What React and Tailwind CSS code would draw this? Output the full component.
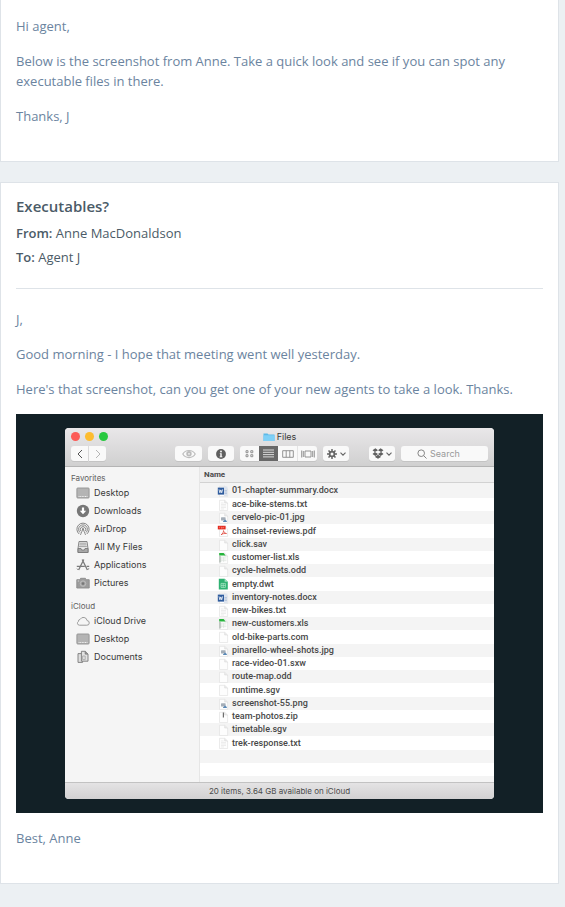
import React from "react";

const files = [
  ["01-chapter-summary.docx", "doc"],
  ["ace-bike-stems.txt", "text"],
  ["cervelo-pic-01.jpg", "image"],
  ["chainset-reviews.pdf", "pdf"],
  ["click.sav", "blank"],
  ["customer-list.xls", "sheet"],
  ["cycle-helmets.odd", "blank"],
  ["empty.dwt", "template"],
  ["inventory-notes.docx", "doc"],
  ["new-bikes.txt", "text"],
  ["new-customers.xls", "sheet"],
  ["old-bike-parts.com", "blank"],
  ["pinarello-wheel-shots.jpg", "image"],
  ["race-video-01.sxw", "blank"],
  ["route-map.odd", "blank"],
  ["runtime.sgv", "blank"],
  ["screenshot-55.png", "image"],
  ["team-photos.zip", "zip"],
  ["timetable.sgv", "blank"],
  ["trek-response.txt", "text"],
];

const favorites = [
  ["Desktop", "desktop"],
  ["Downloads", "downloads"],
  ["AirDrop", "airdrop"],
  ["All My Files", "allfiles"],
  ["Applications", "applications"],
  ["Pictures", "pictures"],
];

const icloud = [
  ["iCloud Drive", "cloud"],
  ["Desktop", "desktop"],
  ["Documents", "documents"],
];

function FileIcon({ kind }) {
  return (
    <svg viewBox="0 0 12 12" className="h-3 w-3 shrink-0" aria-hidden="true">
      {kind !== "template" && (
        <path d="M2.5 1.3h5.2L10.6 4v7.5H2.5z" fill="#fdfdfd" stroke="#dedede" strokeWidth=".6" />
      )}
      {kind !== "template" && kind !== "pdf" && (
        <path d="M7.7 1.3V4h2.9" fill="#ececec" stroke="#d4d4d4" strokeWidth=".5" />
      )}
      {kind === "doc" && (
        <>
          <path d="M7 1.600h3.400v9.500H7z" fill="#dde4ee" />
          <path d="M7.500 5.5h2.400M7.500 7h2.400M7.500 8.5h2.400" stroke="#a9bbd6" strokeWidth=".7" />
          <rect x=".8" y="2.600" width="6.200" height="7" fill="#2f5c9e" />
          <path d="M2 4.4l.9 3.4.9-2.9.9 2.9.9-3.4" fill="none" stroke="#fff" strokeWidth=".8" />
        </>
      )}
      {kind === "text" && (
        <path d="M4 4h2.6M4 5.5h5M4 7h5M4 8.5h5M4 10h3" stroke="#e2e2e2" strokeWidth=".6" />
      )}
      {kind === "image" && (
        <>
          <rect x="4" y="5.2" width="4.600" height="3.4" rx=".6" fill="#a5aeb8" />
          <path d="M6 9.400l2-2 1.800 1.600v.900H6z" fill="#5b89b6" />
        </>
      )}
      {kind === "pdf" && (
        <>
          <rect x=".8" y=".8" width="7.8" height="3.6" fill="#e5281c" />
          <path d="M2.4 3.3V2h1M4.4 3.3V2h.8v1.3zM6.5 3.3V2h.9" stroke="#f7a49c" strokeWidth=".5" fill="none" />
          <path d="M4 9.8C5.6 8.9 6.6 7.3 6.5 5.6c.4 1.7 1.4 2.6 3 2.9C7.600 8.300 5.700 8.600 4 9.800z" fill="none" stroke="#e04a40" strokeWidth=".8" />
        </>
      )}
      {kind === "sheet" && (
        <>
          <path d="M4 5.200v4.800M4 5.200h5.400M4 7h5.400M4 8.600h5.400M6.600 5.200v4.800" stroke="#d3dcd5" strokeWidth=".5" />
          <path d="M3 4v6.500" stroke="#8b9a90" strokeWidth=".9" />
          <path d="M2.200.900h4.400l2 2.600H2.200z" fill="#26b53c" />
        </>
      )}
      {kind === "template" && (
        <>
          <path d="M1.800.8h5.800l3.200 3v7.700h-9z" fill="#2fb272" />
          <path d="M7.600.8l3.200 3H7.600z" fill="#9fe0bf" />
          <path d="M4 5.400h4.400v4H4zM4 7.400h4.400M6.200 5.400v4" fill="none" stroke="#c5f0d8" strokeWidth=".6" />
        </>
      )}
      {kind === "zip" && <path d="M6.400 1.400v5" stroke="#6d6d6d" strokeWidth="1.200" />}
    </svg>
  );
}

function PlaceIcon({ kind }) {
  return (
    <svg viewBox="0 0 14 14" className="h-3.5 w-3.5 shrink-0" fill="none" stroke="#7b7b7b" strokeWidth=".9" aria-hidden="true">
      {kind === "desktop" && (
        <>
          <rect x=".9" y="2" width="12.200" height="10" rx=".8" fill="#b4b4b4" stroke="#929292" />
          <path d="M2.600 10.500h8.800" stroke="#f0f0f0" strokeWidth="1" strokeDasharray="1 .6" />
        </>
      )}
      {kind === "downloads" && (
        <>
          <circle cx="7" cy="7" r="6.200" fill="#777" stroke="none" />
          <path d="M5.900 3.400h2.200v3.400h2.100L7 10.300 3.800 6.800h2.100z" fill="#fff" stroke="none" />
        </>
      )}
      {kind === "airdrop" && (
        <>
          <path d="M3.200 12A6.100 6.100 0 1 1 10.800 12" />
          <path d="M4 10.500A4.400 4.400 0 1 1 10 10.500" />
          <path d="M5 9.200A2.700 2.700 0 1 1 9 9.200" />
          <path d="M4.400 13L7 7l2.600 6" strokeWidth=".8" />
          <circle cx="7" cy="7" r=".9" fill="#7b7b7b" stroke="none" />
        </>
      )}
      {kind === "allfiles" && (
        <>
          <path d="M3 1.500h8l1 7v4H2v-4z" fill="#ececec" />
          <path d="M3.700 3.200h6.600M3.400 4.900h7.200M3.100 6.600h7.800" stroke="#999" />
          <path d="M2 8.500h3l.6 1.500h2.800l.6-1.500h3v4H2z" fill="#a8a8a8" />
        </>
      )}
      {kind === "applications" && (
        <>
          <path d="M7.800 1.500L2.600 12M6.200 1.500L11.400 12" strokeWidth="1.300" />
          <path d="M.8 8.400h8M10.600 8.400h2.600" strokeWidth="1.200" />
          <path d="M1 10.600l1.200 1.400M12.900 10.200l-1.200 1.800" />
        </>
      )}
      {kind === "pictures" && (
        <>
          <path d="M.8 3.700h3l.8-1.400h4.800l.8 1.400h3v8.300H.8z" fill="#9c9c9c" stroke="#8c8c8c" />
          <circle cx="7" cy="7.600" r="2.800" fill="#a5a5a5" stroke="#c4c4c4" strokeWidth=".7" />
          <circle cx="7" cy="7.600" r="1.300" fill="#777" stroke="none" />
          <path d="M1.700 5h1.400" stroke="#ddd" />
        </>
      )}
      {kind === "cloud" && (
        <path d="M3.400 11.200h7.400a2.300 2.300 0 0 0 .3-4.600A3.700 3.700 0 0 0 4.200 5.300 2.100 2.100 0 0 0 2.400 7.500 2 2 0 0 0 3.400 11.200z" stroke="#929292" />
      )}
      {kind === "documents" && (
        <>
          <path d="M2 3.600h4.600v8.800H2z" fill="#dedede" />
          <path d="M5.400 1.300h4l2.600 2.800v7.100H5.400z" fill="#e2e2e2" />
          <path d="M9.200 1.300v2.800h2.800" fill="#9a9a9a" />
          <path d="M6.600 6h2.600v3.600H6.600z" stroke="#aaa" />
        </>
      )}
    </svg>
  );
}

function Chevron() {
  return (
    <svg viewBox="0 0 6 4" className="h-1 w-1.5" fill="none" stroke="#666" strokeWidth="1.100" aria-hidden="true">
      <path d="M.5.6L3 3.200 5.500.6" />
    </svg>
  );
}

function ToolButton({ label, className, children }) {
  return (
    <button
      type="button"
      aria-label={label}
      className={"flex h-[15px] items-center justify-center bg-[#f9f9f9] shadow-[0_1px_0_#c4c4c4] " + className}
    >
      {children}
    </button>
  );
}

function Places({ title, items }) {
  return (
    <section>
      <h3 className="pl-[6px] text-[8px] leading-[11px] text-[#606060]">{title}</h3>
      <ul>
        {items.map(([name, kind]) => (
          <li key={name}>
            <a href="#" className="flex h-[18px] items-center gap-1 pl-[11px] text-[9px] text-[#383838]">
              <PlaceIcon kind={kind} />
              {name}
            </a>
          </li>
        ))}
      </ul>
    </section>
  );
}

function FinderWindow() {
  return (
    <div className="flex flex-col overflow-hidden rounded-[4px] bg-white font-['Inter',sans-serif]">
      <header className="h-[39px] border-b border-[#b4b4b4] bg-linear-to-b from-[#e9e7e9] to-[#d0d0d0] px-[6px]">
        <div className="grid h-[17px] grid-cols-3 items-center">
          <div className="flex gap-[5px]">
            <button type="button" aria-label="Close" className="h-[9px] w-[9px] rounded-full bg-[#fc5b57]" />
            <button type="button" aria-label="Minimize" className="h-[9px] w-[9px] rounded-full bg-[#fdbc2f]" />
            <button type="button" aria-label="Zoom" className="h-[9px] w-[9px] rounded-full bg-[#28c940]" />
          </div>
          <h2 className="flex items-center justify-center gap-[2px] text-[9px] leading-[12px] text-[#383838]">
            <svg viewBox="0 0 12 10" className="h-[10px] w-3" aria-hidden="true">
              <path d="M.5 1.500h4l1 1h6v6.500H.5z" fill="#5db9e8" />
              <path d="M.5 3.200h11V9H.5z" fill="#7fd0f7" />
            </svg>
            Files
          </h2>
        </div>
        <div className="flex pt-[1px]">
          <div className="flex gap-px">
            <ToolButton label="Back" className="w-[17px] rounded-l-[3px]">
              <svg viewBox="0 0 6 10" className="h-[10px] w-1.5" fill="none" stroke="#555" aria-hidden="true">
                <path d="M5 1L1 5l4 4" />
              </svg>
            </ToolButton>
            <ToolButton label="Forward" className="w-[17px] rounded-r-[3px]">
              <svg viewBox="0 0 6 10" className="h-[10px] w-1.5" fill="none" stroke="#b5b5b5" aria-hidden="true">
                <path d="M1 1l4 4-4 4" />
              </svg>
            </ToolButton>
          </div>
          <div className="ml-auto flex gap-[6px]">
            <ToolButton label="Quick look" className="w-[27px] rounded-[3px]">
              <svg viewBox="0 0 14 10" className="h-[10px] w-3.5" fill="none" stroke="#bcbcbc" strokeWidth="1.200" aria-hidden="true">
                <path d="M.8 5C3.500.3 10.500.3 13.200 5 10.500 9.700 3.500 9.700.8 5z" />
                <circle cx="7" cy="4.800" r="2.700" fill="#bcbcbc" stroke="none" />
                <circle cx="7" cy="4.800" r=".9" fill="#f4f4f4" stroke="none" />
              </svg>
            </ToolButton>
            <ToolButton label="Get info" className="w-[26px] rounded-[3px]">
              <svg viewBox="0 0 10 10" className="h-[10px] w-[10px]" aria-hidden="true">
                <circle cx="5" cy="5" r="4.900" fill="#5f5f5f" />
                <circle cx="5" cy="2.500" r=".9" fill="#fff" />
                <path d="M3.800 4.200h1.900v3.200h.7v.8H3.600v-.8h.7V5h-.5z" fill="#fff" />
              </svg>
            </ToolButton>
            <div className="flex">
              <ToolButton label="Icon view" className="w-[19px] rounded-l-[3px]">
                <svg viewBox="0 0 9 8" className="h-2 w-[9px]" fill="none" stroke="#888" strokeWidth=".9" aria-hidden="true">
                  <path d="M1 .7h2v2H1zM5.800.7h2v2h-2zM1 4.700h2v2H1zM5.800 4.700h2v2h-2z" />
                </svg>
              </ToolButton>
              <button type="button" aria-label="List view" aria-pressed="true" className="flex h-[15px] w-[19px] items-center justify-center bg-[#686868]">
                <svg viewBox="0 0 11 9" className="h-[9px] w-[11px]" stroke="#e6e6e6" strokeWidth=".9" aria-hidden="true">
                  <path d="M0 1h11M0 3.300h11M0 5.600h11M0 7.900h11" />
                </svg>
              </button>
              <ToolButton label="Column view" className="w-[19px]">
                <svg viewBox="0 0 12 8" className="h-2 w-3" fill="none" stroke="#888" strokeWidth=".9" aria-hidden="true">
                  <path d="M.7.7h10.600v6.600H.7zM4.200.7v6.600M7.800.7v6.600" />
                </svg>
              </ToolButton>
              <ToolButton label="Cover view" className="w-[20px] rounded-r-[3px] border-l border-[#e4e4e4]">
                <svg viewBox="0 0 14 8" className="h-2 w-3.5" fill="none" stroke="#888" strokeWidth=".9" aria-hidden="true">
                  <path d="M4 1h6v6H4zM.7.500v7M2.300 1v6M11.700 1v6M13.300.5v7" />
                </svg>
              </ToolButton>
            </div>
            <ToolButton label="Actions" className="w-[26px] gap-[3px] rounded-[3px]">
              <svg viewBox="0 0 10 10" className="h-[10px] w-[10px]" fill="none" stroke="#666" aria-hidden="true">
                <circle cx="5" cy="5" r="2.400" strokeWidth="1.800" />
                <path d="M5 0v2M5 8v2M0 5h2M8 5h2M1.500 1.500l1.400 1.400M7.100 7.100l1.400 1.400M8.500 1.500L7.100 2.900M2.900 7.100L1.500 8.500" strokeWidth="1.500" />
              </svg>
              <Chevron />
            </ToolButton>
          </div>
          <ToolButton label="Dropbox" className="ml-[20px] w-[26px] gap-[2px] rounded-[3px]">
            <svg viewBox="0 0 12 11" className="h-[11px] w-3" fill="#606060" aria-hidden="true">
              <path d="M3.400.3L6 2.200 2.900 4.100.5 2.200zM8.600.3L6 2.200l3.100 1.900 2.400-1.900zM.5 6.100l2.400-2L6 6.100 3.400 8zM11.500 6.100l-2.400-2L6 6.100 8.600 8zM3 8.400l.5.2L6 6.700l2.500 1.900.5-.2v.7l-3 1.700-3-1.700z" />
            </svg>
            <Chevron />
          </ToolButton>
          <label className="ml-[6px] flex h-[15px] w-[87px] items-center gap-[3px] rounded-[3px] bg-[#f9f9f9] pl-[16px] shadow-[0_1px_0_#c4c4c4]">
            <svg viewBox="0 0 10 10" className="h-[10px] w-[10px] shrink-0" fill="none" stroke="#858585" aria-hidden="true">
              <circle cx="4.200" cy="4.200" r="3.300" />
              <path d="M6.600 6.600L9.500 9.500" />
            </svg>
            <input
              type="text"
              aria-label="Search"
              placeholder="Search"
              className="w-full min-w-0 bg-transparent text-[9px] leading-[12px] outline-none placeholder:text-[#9a9a9a]"
            />
          </label>
        </div>
      </header>

      <div className="flex h-[315px]">
        <nav className="flex w-[135px] shrink-0 flex-col gap-[9px] border-r border-[#e6e6e6] bg-[#f5f5f5] pt-[6px]">
          <Places title="Favorites" items={favorites} />
          <Places title="iCloud" items={icloud} />
        </nav>
        <div className="min-w-0 flex-1 overflow-hidden">
          <table className="w-full border-separate border-spacing-0 font-['Roboto',sans-serif]">
            <thead>
              <tr>
                <th scope="col" className="h-4 border-b border-[#d2d2d2] bg-[#eee] p-0 pl-1 text-left text-[8px] leading-[15px] font-bold text-[#4a4a4a]">
                  Name
                </th>
              </tr>
            </thead>
            <tbody>
              {files.map(([name, kind]) => (
                <tr key={name} className="h-[13px] odd:bg-[#f4f4f4] first:h-[15px] nth-[4n]:h-[14px]">
                  <td className="p-0">
                    <div className="flex items-center gap-[3px] pl-[17px] text-[9px] leading-[13px] font-medium text-[#484848]">
                      <FileIcon kind={kind} />
                      {name}
                    </div>
                  </td>
                </tr>
              ))}
              <tr className="h-[13px] bg-[#f4f4f4]"><td className="p-0" /></tr>
              <tr className="h-[13px]"><td className="p-0" /></tr>
              <tr className="h-[13px] bg-[#f4f4f4]"><td className="p-0" /></tr>
            </tbody>
          </table>
        </div>
      </div>

      <footer className="h-[17px] border-t border-[#c2c2c2] bg-linear-to-b from-[#e4e3e4] to-[#d2d1d2] text-center text-[8px] leading-[16px] text-[#4c4c4c]">
        20 items, 3.64 GB available on iCloud
      </footer>
    </div>
  );
}

export default function App() {
  return (
    <main className="flex min-h-screen flex-col gap-5 bg-[#ecf0f3] pr-[6px] font-['Open_Sans',sans-serif] text-[13px] leading-5 text-[#6b84a0]">
      <article className="flex flex-col gap-[15px] border-x border-b border-[#dee3e8] bg-white px-[15px] pt-4 pb-[35px]">
        <p>Hi agent,</p>
        <p>Below is the screenshot from Anne. Take a quick look and see if you can spot any executable files in there.</p>
        <p>Thanks, J</p>
      </article>

      <article className="border border-[#dee3e8] bg-white px-[15px] pt-3 pb-[35px]">
        <header className="border-b border-[#dee3e8] pb-[19px] text-[#4b5b67]">
          <h1 className="text-[15px] leading-[22px] font-semibold">Executables?</h1>
          <p className="mt-1 leading-6">
            <b className="font-semibold">From:</b> Anne MacDonaldson
          </p>
          <p className="leading-6">
            <b className="font-semibold">To:</b> Agent J
          </p>
        </header>
        <div className="flex flex-col gap-[15px] pt-5">
          <p>J,</p>
          <p>Good morning - I hope that meeting went well yesterday.</p>
          <p>Here's that screenshot, can you get one of your new agents to take a look. Thanks.</p>
          <figure className="bg-[#122026] px-[49px] py-[14px]">
            <FinderWindow />
          </figure>
          <p>Best, Anne</p>
        </div>
      </article>
    </main>
  );
}
